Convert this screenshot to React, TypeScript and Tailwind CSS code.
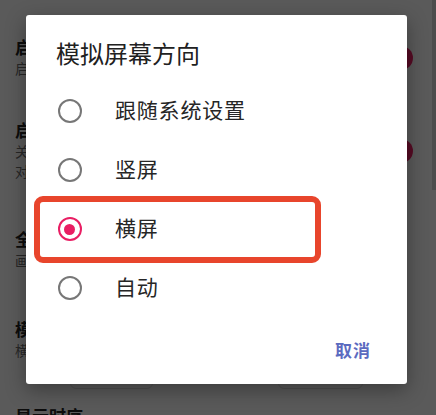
import React from "react";

const options = ["跟随系统设置", "竖屏", "横屏", "自动"];

function Radio({ checked }: { checked: boolean }) {
  return checked ? (
    <div className="w-[24px] h-[24px] rounded-full border-[2.5px] border-[#e91e63] flex items-center justify-center shrink-0">
      <div className="w-[11px] h-[11px] rounded-full bg-[#e91e63]" />
    </div>
  ) : (
    <div className="w-[24px] h-[24px] rounded-full border-[2.5px] border-[#777777] shrink-0" />
  );
}

function Toggle() {
  return (
    <div className="relative w-[40px] h-[24px] shrink-0">
      <div className="absolute left-0 top-[5px] w-[34px] h-[14px] rounded-full bg-[#f48fb1]" />
      <div className="absolute right-0 top-0 w-[24px] h-[24px] rounded-full bg-[#e91e63]" />
    </div>
  );
}

function SettingRow({
  title,
  lines,
  toggle,
  className,
}: {
  title: string;
  lines: string[];
  toggle?: boolean;
  className?: string;
}) {
  return (
    <div className={"flex items-center justify-between pl-[15px] pr-[23px] " + (className ?? "")}>
      <div className="flex flex-col">
        <div className="text-[17px] leading-[22px] font-bold text-[#212121]">{title}</div>
        {lines.map((l, i) => (
          <div key={i} className="text-[14px] leading-[20px] text-[#6b6b6b]">
            {l}
          </div>
        ))}
      </div>
      {toggle && <Toggle />}
    </div>
  );
}

export default function App() {
  return (
    <div className="relative w-[436px] h-[415px] overflow-hidden bg-[#f5f5f5] font-['Roboto','Noto_Sans_CJK_SC',sans-serif]">
      {/* page behind the dialog */}
      <div className="flex flex-col">
        <SettingRow className="mt-[37px]" title="启用模拟器" lines={["启用后将模拟设备屏幕"]} toggle />
        <SettingRow
          className="mt-[41px]"
          title="启动时自动打开"
          lines={["关闭后需要手动开启模拟功能，", "对部分应用可能无效"]}
          toggle
        />
        <SettingRow className="mt-[47px]" title="全屏显示" lines={["画面将铺满整个屏幕"]} />
        <SettingRow className="mt-[48px]" title="模拟屏幕方向" lines={["横屏"]} />
        <div className="mt-[12px] flex gap-[125px] pl-[70px]">
          <div className="w-[83px] h-[16px] rounded-[6px] border border-[#d6d6d6]" />
          <div className="w-[85px] h-[16px] rounded-[6px] border border-[#d6d6d6]" />
        </div>
        <div className="mt-[17px] pl-[15px] text-[17px] leading-[22px] font-bold text-[#212121]">显示时序</div>
      </div>
      <div className="absolute right-0 top-0 w-[4px] h-[190px] bg-[#cfcfcf]" />

      {/* scrim */}
      <div className="absolute inset-0 bg-black/[0.63]" />

      {/* dialog */}
      <div className="absolute left-[26px] top-[15px] w-[381px] h-[369px] bg-white rounded-[3px] shadow-[0_6px_20px_rgba(0,0,0,0.35)] flex flex-col pt-[26px]">
        <div className="pl-[30px] text-[24px] leading-[28px] text-[#212121]">模拟屏幕方向</div>
        <div className="mt-[12.5px] flex flex-col">
          {options.map((o, i) => (
            <div key={o} className="h-[59px] flex items-center pl-[31.5px]">
              <Radio checked={i === 2} />
              <span className="ml-[33.5px] text-[21px] leading-[28px] tracking-[0.8px] text-[#262626]">{o}</span>
            </div>
          ))}
        </div>
        <div className="mt-[19.5px] h-[30px] flex items-center justify-end pr-[36px]">
          <span className="text-[17px] font-semibold text-[#5c6bc0] tracking-[1px]">取消</span>
        </div>
      </div>

      {/* highlight annotation */}
      <div className="absolute left-[34px] top-[196px] w-[287px] h-[67px] border-[6px] border-[#e8452c] rounded-[9px]" />
    </div>
  );
}
